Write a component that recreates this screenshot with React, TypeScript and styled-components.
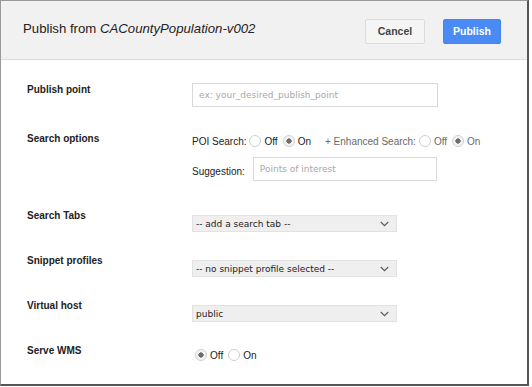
import React from "react";
import styled, {createGlobalStyle} from "styled-components";

const GlobalStyle = createGlobalStyle`
  html, body {
    margin: 0;
    padding: 0;
    background: #ffffff;
  }

  body {
    font-family: "Liberation Sans", Arial, sans-serif;
  }
`

const Dialog = styled.div`
  box-sizing: border-box;
  width: 529px;
  height: 386px;
  display: flex;
  flex-direction: column;

  background: #ffffff;
  border-left: 1px solid #9a9a9a;
  border-top: 1px solid #9a9a9a;
  border-right: 2px solid #555555;
  border-bottom: 2px solid #555555;
`

const Header = styled.div`
  height: 59px;
  display: flex;
  align-items: center;
  padding: 2px 26px 0 22px;
  box-sizing: border-box;

  background: #f1f1f1;
  border-bottom: 1px solid #dadada;
`

const Title = styled.h1`
  flex: 1;
  margin: 0 0 5px;

  font-size: 13.2px;
  font-weight: normal;
  color: #222222;

  & > em {
    font-style: italic;
  }
`

const HeaderButton = styled.button<{ $primary?: boolean }>`
  box-sizing: border-box;
  height: 25px;
  margin-left: ${p => p.$primary ? "18px" : "0"};
  padding: 0;
  width: ${p => p.$primary ? "58px" : "60px"};

  font-family: "Liberation Sans", Arial, sans-serif;
  font-size: 10.5px;
  font-weight: bold;
  color: ${p => p.$primary ? "#ffffff" : "#444444"};
  background: ${p => p.$primary ? "#4a8af4" : "#f5f5f5"};
  border: 1px solid ${p => p.$primary ? "#4685ee" : "#dcdcdc"};
  border-radius: 2px;
  cursor: pointer;
`

const Body = styled.div`
  display: flex;
  flex-direction: column;
  padding: 23px 0 0 26px;
`

const Row = styled.div<{ $mb: number }>`
  display: flex;
  align-items: flex-start;
  margin-bottom: ${p => p.$mb}px;
`

const Label = styled.div`
  width: 165px;
  flex-shrink: 0;

  font-size: 10px;
  line-height: 14px;
  font-weight: bold;
  color: #222222;
`

const Control = styled.div<{ $offset?: number }>`
  display: flex;
  flex-direction: column;
  gap: 9px;
  margin-top: ${p => p.$offset || 0}px;
`

const TextInput = styled.input<{ $width: number }>`
  box-sizing: border-box;
  width: ${p => p.$width}px;
  height: 24px;
  padding: 0 6px;

  font-family: "DejaVu Sans", "Lucida Grande", sans-serif;
  font-size: 9px;
  color: #333333;
  background: #ffffff;
  border: 1px solid #d9d9d9;
  border-radius: 0;
  outline: none;

  &::placeholder {
    color: #a8a8a8;
  }
`

const OptionLine = styled.div`
  display: flex;
  align-items: center;
  height: 14px;

  font-size: 10px;
  color: #222222;
`

const Group = styled.div<{ $muted?: boolean }>`
  display: flex;
  align-items: center;
  margin-left: ${p => p.$muted ? "12px" : "0"};
  color: ${p => p.$muted ? "#6a6a6a" : "inherit"};
`

const RadioOption = styled.label`
  display: flex;
  align-items: center;
  margin-right: 2px;
  cursor: pointer;
`

const Radio = styled.input`
  appearance: none;
  box-sizing: border-box;
  width: 12px;
  height: 12px;
  margin: 0 3px;

  background: #ffffff;
  border: 1px solid #cfcfcf;
  border-radius: 50%;

  &:checked {
    background: radial-gradient(circle, #6e6e6e 0 2.4px, #f4f4f4 2.9px);
  }
`

const SuggestionLine = styled.div`
  display: flex;
  align-items: flex-end;
  gap: 8px;

  font-size: 10px;
  color: #222222;

  & > span {
    padding-bottom: 4px;
  }
`

const SelectBox = styled.div`
  box-sizing: border-box;
  width: 205px;
  height: 17px;
  display: flex;
  align-items: center;
  justify-content: space-between;
  padding: 0 7px 0 3px;

  font-family: "DejaVu Sans", "Lucida Grande", sans-serif;
  font-size: 9px;
  color: #222222;
  background: #efefef;
  border: 1px solid #e2e2e2;
`

function Chevron() {
	return (
		<svg width="9" height="6" viewBox="0 0 9 6">
			<path d="M0.8 1 L4.5 4.6 L8.2 1" fill="none" stroke="#5c5c5c" strokeWidth="1.2"/>
		</svg>
	)
}

function Select({value}: { value: string }) {
	return (
		<SelectBox>
			<span>{value}</span>
			<Chevron/>
		</SelectBox>
	)
}

function OnOff({name, on}: { name: string, on: boolean }) {
	return (
		<>
			<RadioOption>
				<Radio type="radio" name={name} defaultChecked={!on}/>Off
			</RadioOption>
			<RadioOption>
				<Radio type="radio" name={name} defaultChecked={on}/>On
			</RadioOption>
		</>
	)
}

export default function App(): JSX.Element {
	return (
		<>
			<GlobalStyle/>
			<Dialog>
				<Header>
					<Title>Publish from <em>CACountyPopulation-v002</em></Title>
					<HeaderButton>Cancel</HeaderButton>
					<HeaderButton $primary>Publish</HeaderButton>
				</Header>
				<Body>
					<Row $mb={25}>
						<Label>Publish point</Label>
						<TextInput $width={246} placeholder="ex: your_desired_publish_point"/>
					</Row>
					<Row $mb={28}>
						<Label>Search options</Label>
						<Control $offset={2}>
							<OptionLine>
								<Group>
									POI Search:
									<OnOff name="poi" on/>
								</Group>
								<Group $muted>
									+ Enhanced Search:
									<OnOff name="enhanced" on/>
								</Group>
							</OptionLine>
							<SuggestionLine>
								<span>Suggestion:</span>
								<TextInput $width={184} placeholder="Points of interest"/>
							</SuggestionLine>
						</Control>
					</Row>
					<Row $mb={22}>
						<Label>Search Tabs</Label>
						<Control $offset={6}>
							<Select value="-- add a search tab --"/>
						</Control>
					</Row>
					<Row $mb={22}>
						<Label>Snippet profiles</Label>
						<Control $offset={6}>
							<Select value="-- no snippet profile selected --"/>
						</Control>
					</Row>
					<Row $mb={22}>
						<Label>Virtual host</Label>
						<Control $offset={6}>
							<Select value="public"/>
						</Control>
					</Row>
					<Row $mb={0}>
						<Label>Serve WMS</Label>
						<Control $offset={4}>
							<OptionLine>
								<OnOff name="wms" on={false}/>
							</OptionLine>
						</Control>
					</Row>
				</Body>
			</Dialog>
		</>
	)
}
